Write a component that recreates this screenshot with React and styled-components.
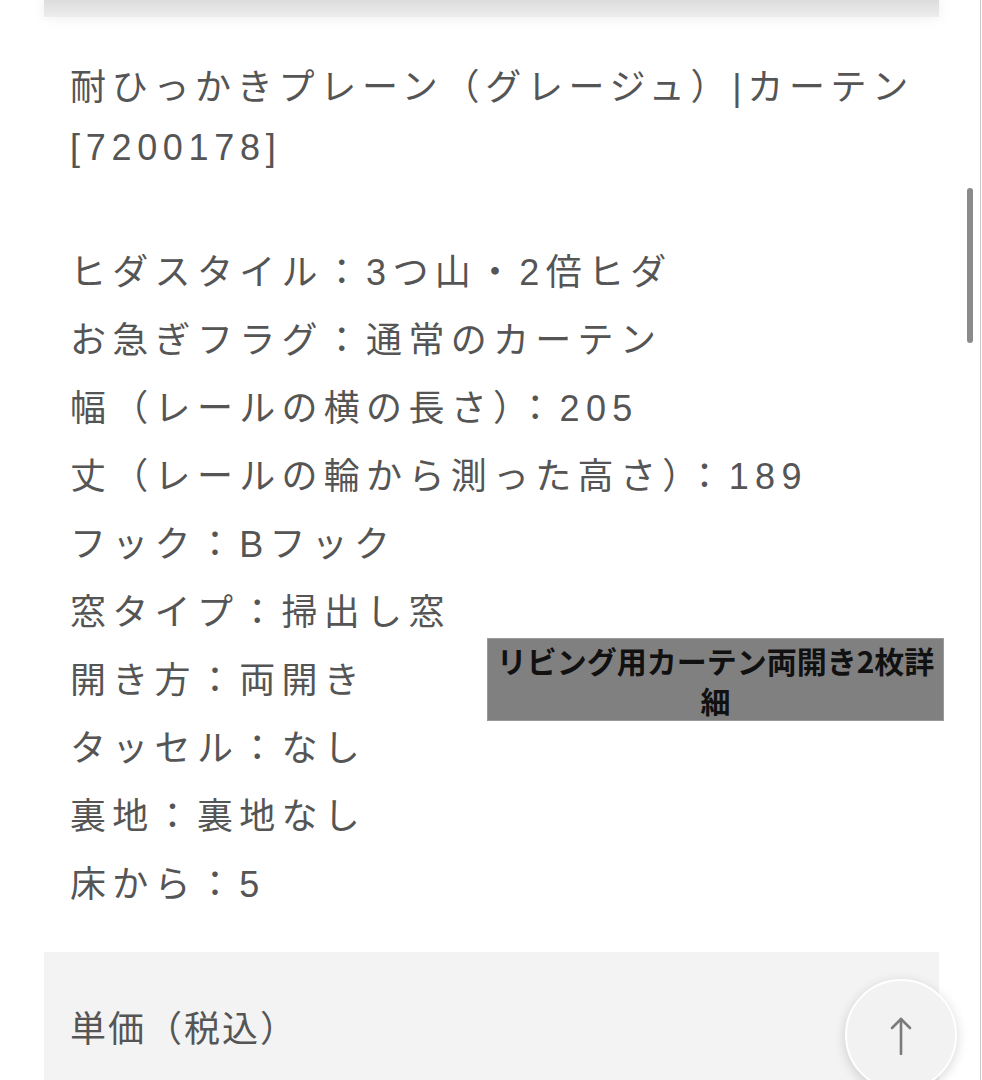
import React from "react";
import styled, { createGlobalStyle } from "styled-components";

const GlobalStyle = createGlobalStyle`
  html, body {
    margin: 0;
    padding: 0;
    background: #ffffff;
  }
  body {
    font-family: "Liberation Sans", "Noto Sans CJK JP", sans-serif;
    color: #555555;
  }
`;

const Page = styled.div`
  position: relative;
  display: flex;
  width: 980px;
  height: 1080px;
  overflow: hidden;
  border-right: 1px solid #c9c9c9;
  background: #ffffff;
`;

const Content = styled.div`
  position: relative;
  display: flex;
  flex-direction: column;
  margin-left: 44px;
  width: 895px;
`;

const TopPanel = styled.div`
  height: 17px;
  flex-shrink: 0;
  background: linear-gradient(#dcdcdc, #ededed);
  box-shadow: 0 0 14px rgba(0, 0, 0, 0.08);
`;

const Details = styled.section`
  display: flex;
  flex-direction: column;
  gap: 61px;
  padding: 41px 0 0 26px;
`;

const Title = styled.h1`
  margin: 0;
  font-size: 36px;
  font-weight: 400;
  line-height: 60px;
  letter-spacing: 5.7px;
  white-space: nowrap;
  color: #555555;
`;

const SpecList = styled.div`
  display: flex;
  flex-direction: column;
`;

const SpecRow = styled.div`
  font-size: 36px;
  line-height: 68px;
  letter-spacing: 6.3px;
  white-space: nowrap;
  color: #555555;
`;

const PricePanel = styled.div`
  margin-top: 33px;
  background: #f3f3f3;
  padding: 44px 26px 40px;
`;

const PriceLabel = styled.div`
  font-size: 36px;
  line-height: 68px;
  letter-spacing: 2px;
  color: #555555;
`;

const AltBox = styled.div`
  position: absolute;
  left: 443px;
  top: 638px;
  width: 457px;
  height: 83px;
  box-sizing: border-box;
  background: #808080;
  border: 1px solid #9a9a9a;
  display: flex;
  align-items: center;
  justify-content: center;
  text-align: center;
  padding: 0 6px;
  font-family: "Noto Sans CJK JP", sans-serif;
  font-weight: 700;
  font-size: 30px;
  line-height: 40px;
  color: #111111;
`;

const ScrollThumb = styled.div`
  position: absolute;
  left: 967px;
  top: 188px;
  width: 6px;
  height: 155px;
  border-radius: 3px;
  background: #8a8a8a;
`;

const TopButton = styled.button`
  position: absolute;
  left: 845px;
  top: 979px;
  width: 112px;
  height: 112px;
  box-sizing: border-box;
  border-radius: 50%;
  border: 2px solid #ffffff;
  background: #f2f2f2;
  box-shadow: 0 3px 12px rgba(0, 0, 0, 0.16);
  display: flex;
  justify-content: center;
  padding: 36px 0 0;
  cursor: pointer;
`;

const specs = [
  "ヒダスタイル：3つ山・2倍ヒダ",
  "お急ぎフラグ：通常のカーテン",
  "幅（レールの横の長さ）：205",
  "丈（レールの輪から測った高さ）：189",
  "フック：Bフック",
  "窓タイプ：掃出し窓",
  "開き方：両開き",
  "タッセル：なし",
  "裏地：裏地なし",
  "床から：5",
];

export default function App() {
  return (
    <>
      <GlobalStyle />
      <Page>
        <Content>
          <TopPanel />
          <Details>
            <Title>
              耐ひっかきプレーン（グレージュ）|カーテン
              <br />
              [7200178]
            </Title>
            <SpecList>
              {specs.map((s) => (
                <SpecRow key={s}>{s}</SpecRow>
              ))}
            </SpecList>
          </Details>
          <AltBox>リビング用カーテン両開き2枚詳細</AltBox>
          <PricePanel>
            <PriceLabel>単価（税込）</PriceLabel>
          </PricePanel>
        </Content>
        <ScrollThumb />
        <TopButton aria-label="ページトップへ">
          <svg width="24" height="38" viewBox="0 0 24 38" fill="none">
            <path d="M12 2 V37" stroke="#7a7a7a" strokeWidth="2.6" strokeLinecap="round" />
            <path d="M3 11 L12 2 L21 11" stroke="#7a7a7a" strokeWidth="2.6" strokeLinecap="round" strokeLinejoin="round" />
          </svg>
        </TopButton>
      </Page>
    </>
  );
}
